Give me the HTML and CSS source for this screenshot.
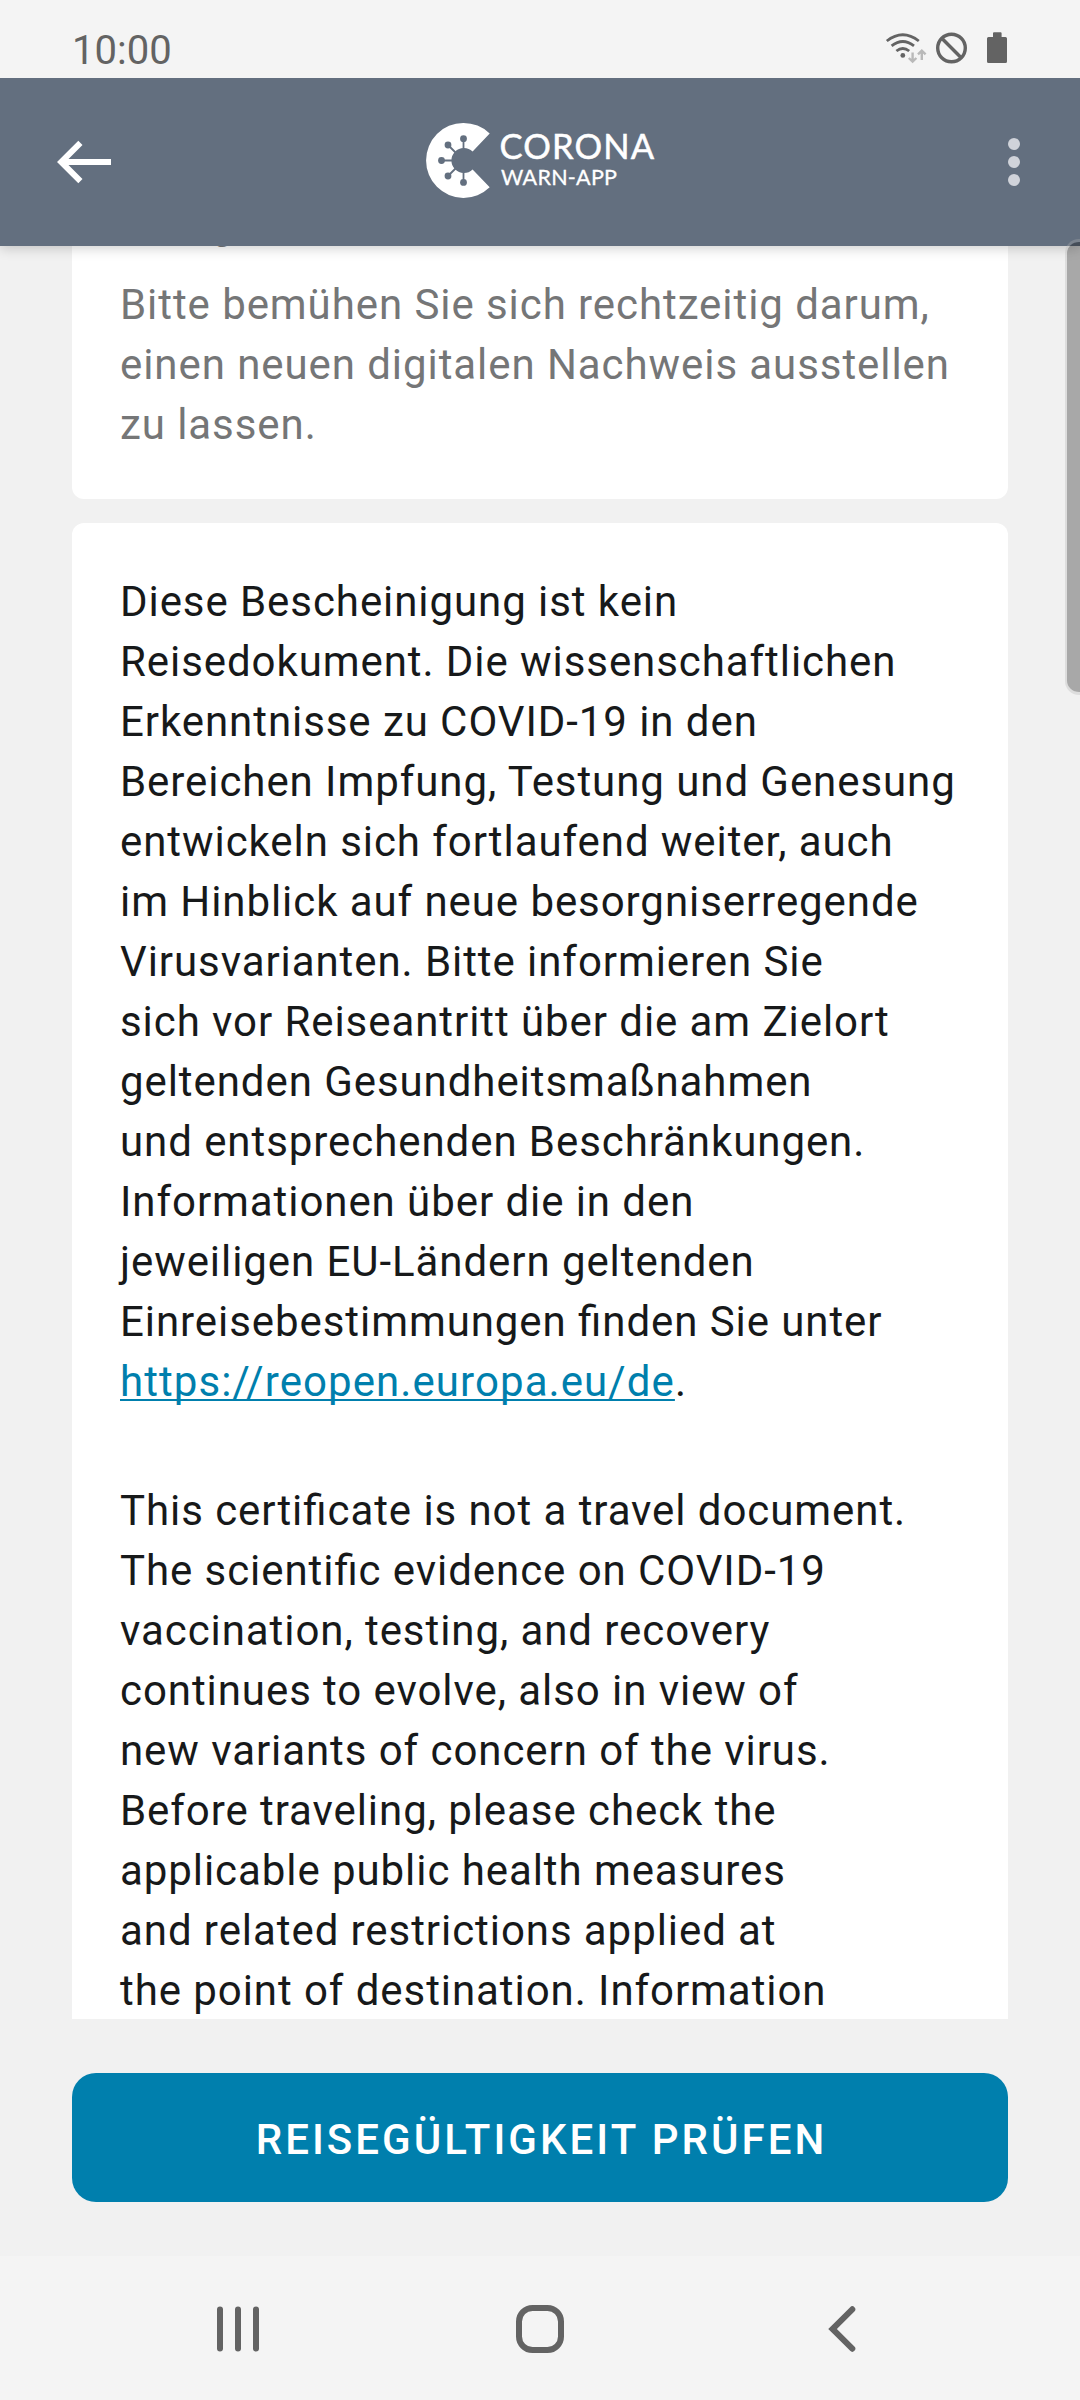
FILE: index.html
```
<!DOCTYPE html>
<html lang="de">
<head>
<meta charset="utf-8">
<title>Corona-Warn-App</title>
<link rel="stylesheet" href="styles.css">
</head>
<body>
<div class="screen">
  <div class="status-bar">
    <span class="clock">10:00</span>
    <svg class="status-icons" width="124" height="40" viewBox="884 28 124 40" aria-hidden="true">
      <g fill="none" stroke="#636363" stroke-width="2.8">
        <path d="M886.8 41Q902.8 28.6 918.8 41"/>
        <path d="M891.6 45.9Q902.8 37.2 914 45.9"/>
        <path d="M896.4 51Q902.8 46 909.2 51"/>
      </g>
      <circle cx="902.8" cy="55.4" r="2.4" fill="#636363"/>
      <g fill="none" stroke="#b9b9b9" stroke-width="2.4">
        <path d="M912.6 52.5V61.5M908.8 58L912.6 61.6L916.4 58"/>
        <path d="M921.8 60V50.5M918 54.4L921.8 50.6L925.6 54.4"/>
      </g>
      <g fill="none" stroke="#636363" stroke-width="3.4">
        <circle cx="951.5" cy="48" r="13.8"/>
        <path d="M941.8 38.3L961.2 57.7"/>
      </g>
      <path fill="#636363" d="M993 37V33.3a1 1 0 0 1 1-1h6.600a1 1 0 0 1 1 1V37H1005.500a1.500 1.500 0 0 1 1.500 1.500V61.500a1.500 1.500 0 0 1-1.500 1.500H988.500a1.500 1.500 0 0 1-1.500-1.500V38.500a1.500 1.500 0 0 1 1.500-1.500z"/>
    </svg>
  </div>

  <header class="app-bar">
    <svg width="60" height="48" viewBox="54 138 60 48" aria-label="Zurück">
      <path fill="#fff" d="M57 162L78.300 140.700L82.500 145L68.500 159H111V165H68.500L82.500 179L78.300 183.300z"/>
    </svg>
    <svg class="logo" width="240" height="80" viewBox="422 122 240 80" role="img" aria-label="Corona Warn-App">
      <path fill="#fff" d="M489.700 133.500A37.500 37.500 0 1 0 489.700 187.300L472.600 169.500A12.500 12.500 0 1 1 472.600 151.500z"/>
      <g stroke="#636f7f" stroke-width="1.800">
        <path d="M463.500 149V139M455.500 152.500L448 145M452 160.500H441.500M455.500 168.500L448 176M463.500 172V182"/>
      </g>
      <g fill="#636f7f">
        <circle cx="463.500" cy="138.700" r="3.400"/>
        <circle cx="448" cy="145" r="3.400"/>
        <circle cx="441.500" cy="160.500" r="3.400"/>
        <circle cx="448" cy="176" r="3.400"/>
        <circle cx="463.500" cy="182.400" r="3.400"/>
      </g>
      <text class="logo-name" x="499.500" y="158.800" textLength="154.500">CORONA</text>
      <text class="logo-sub" x="501" y="184.600" textLength="116">WARN-APP</text>
    </svg>
    <svg width="12" height="48" viewBox="1008 138 12 48" aria-label="Menü">
      <g fill="#d0d3da">
        <circle cx="1014" cy="144" r="6"/>
        <circle cx="1014" cy="162" r="6"/>
        <circle cx="1014" cy="180" r="6"/>
      </g>
    </svg>
  </header>

  <main class="content">
    <section class="card card-expiry">
      <p>Gültig bis</p>
      <p>Bitte bemühen Sie sich rechtzeitig darum,<br>einen neuen digitalen Nachweis ausstellen<br>zu lassen.</p>
    </section>
    <section class="card card-notice">
      <p>Diese Bescheinigung ist kein<br>Reisedokument. Die wissenschaftlichen<br>Erkenntnisse zu COVID-19 in den<br>Bereichen Impfung, Testung und Genesung<br>entwickeln sich fortlaufend weiter, auch<br>im Hinblick auf neue besorgniserregende<br>Virusvarianten. Bitte informieren Sie<br>sich vor Reiseantritt über die am Zielort<br>geltenden Gesundheitsmaßnahmen<br>und entsprechenden Beschränkungen.<br>Informationen über die in den<br>jeweiligen EU-Ländern geltenden<br>Einreisebestimmungen finden Sie unter<br><a class="link" href="https://reopen.europa.eu/de">https://reopen.europa.eu/de</a>.</p>
      <p lang="en">This certificate is not a travel document.<br>The scientific evidence on COVID-19<br>vaccination, testing, and recovery<br>continues to evolve, also in view of<br>new variants of concern of the virus.<br>Before traveling, please check the<br>applicable public health measures<br>and related restrictions applied at<br>the point of destination. Information</p>
    </section>
  </main>

  <footer class="actions">
    <button class="primary" type="button">REISEGÜLTIGKEIT PRÜFEN</button>
  </footer>

  <nav class="nav-bar">
    <svg width="48" height="48" viewBox="214 2305 48 48" aria-hidden="true">
      <path stroke="#636363" stroke-width="6" stroke-linecap="round" d="M220 2309.500V2348.500M238 2309.500V2348.500M256 2309.500V2348.500"/>
    </svg>
    <svg width="48" height="48" viewBox="0 0 48 48" aria-hidden="true">
      <rect x="3" y="3" width="42" height="42" rx="13.500" fill="none" stroke="#636363" stroke-width="6"/>
    </svg>
    <svg width="48" height="48" viewBox="818 2305 48 48" aria-hidden="true">
      <path fill="none" stroke="#636363" stroke-width="6" stroke-linecap="round" d="M852.300 2309.300L832.500 2329L852.300 2348.700"/>
    </svg>
  </nav>
  <div class="scroll-thumb"></div>
</div>
</body>
</html>
```
FILE: styles.css
```
* {
  box-sizing: border-box;
}

body {
  margin: 0;
  background: #f1f1f1;
  font-family: Roboto, sans-serif;
}

.screen {
  position: relative;
  display: flex;
  flex-direction: column;
  width: 1080px;
  height: 2400px;
  overflow: hidden;
}

.status-bar {
  position: relative;
  z-index: 2;
  display: flex;
  flex: none;
  justify-content: space-between;
  height: 78px;
  padding: 0 72px;
  background: #f4f4f4;
}

.clock {
  color: #636363;
  font-size: 40px;
  line-height: 48px;
  padding-top: 27px;
}

.status-icons {
  margin-top: 28px;
}

.app-bar {
  position: relative;
  z-index: 1;
  display: flex;
  flex: none;
  align-items: center;
  justify-content: space-between;
  height: 168px;
  padding: 0 60px 0 54px;
  background: #636f7f;
  box-shadow: 0 2px 12px rgba(0, 0, 0, 0.2);
}

.logo {
  margin-right: 38px;
}

.logo-name,
.logo-sub {
  fill: #fff;
  stroke: #fff;
  font-family: Lato, sans-serif;
}

.logo-name {
  font-size: 34.500px;
  stroke-width: 0.500px;
}

.logo-sub {
  font-size: 21.500px;
  stroke-width: 0.300px;
}

.content {
  display: flex;
  flex: none;
  flex-direction: column;
  gap: 24px;
  height: 1773px;
  padding: 0 72px;
  overflow: hidden;
}

.card {
  flex: none;
  border-radius: 12px;
  background: #fff;
  padding: 49px 48px;
  color: #17191a;
  font-size: 42px;
  line-height: 60px;
  letter-spacing: 0.930px;
  font-feature-settings: "liga" 1;
  white-space: nowrap;
}

.card p {
  margin: 0;
}

.card-expiry {
  margin-top: -52px;
  padding-top: 0;
  padding-bottom: 44px;
  color: #757677;
}

.card-expiry p + p {
  margin-top: 21px;
}

.card-notice p + p {
  margin-top: 69px;
}

.link {
  color: #007fad;
  letter-spacing: 1.080px;
  text-decoration: underline;
  text-decoration-thickness: 2px;
  text-decoration-skip-ink: none;
  text-underline-offset: 3px;
}

.actions {
  flex: none;
  height: 237px;
  padding: 54px 72px;
}

.primary {
  display: block;
  width: 100%;
  height: 129px;
  padding: 4px 0 0 3px;
  border: 0;
  border-radius: 24px;
  background: #007fad;
  color: #fff;
  font: 500 42px Roboto, sans-serif;
  letter-spacing: 3.030px;
}

.nav-bar {
  display: flex;
  flex: none;
  align-items: center;
  justify-content: space-between;
  height: 144px;
  padding: 2px 214px 0;
  background: #f4f4f4;
}

.scroll-thumb {
  position: absolute;
  z-index: 2;
  top: 239px;
  right: -3px;
  width: 18px;
  height: 456px;
  border: 3px solid rgba(176, 176, 176, 0.310);
  border-width: 3px 0 3px 2px;
  border-radius: 14px 0 0 14px;
  background: rgba(0, 0, 0, 0.300) padding-box;
}
```
